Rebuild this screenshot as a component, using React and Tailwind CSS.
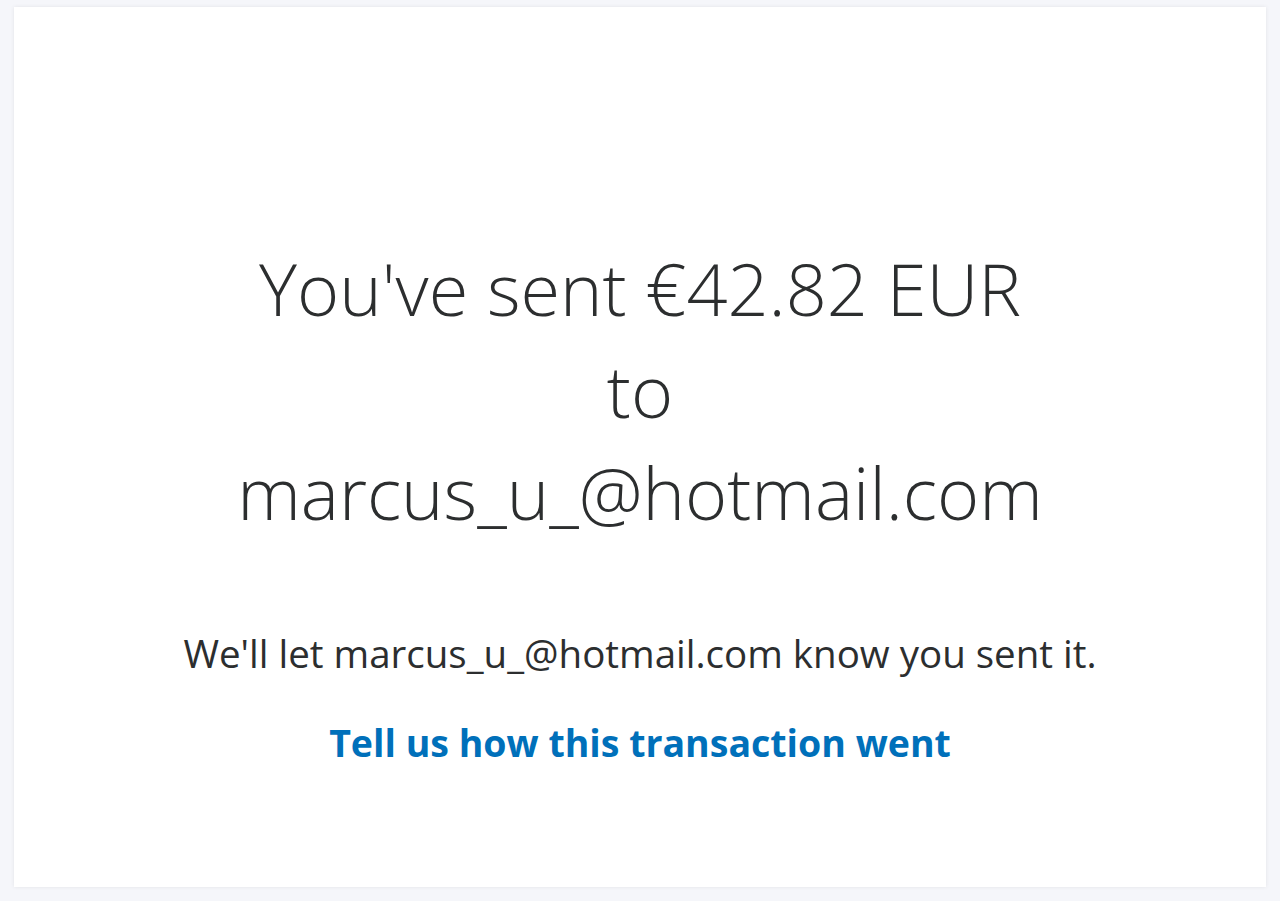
import React from 'react';

export default function App() {
  return (
    <div className="min-h-[901px] bg-[#f5f6fa] pt-[7px] pb-[14px] pl-[14px] pr-[14px] font-['Open_Sans',sans-serif]">
      <div className="h-[880px] bg-white shadow-[0_0_4px_rgba(0,0,0,0.08)] flex flex-col items-center pt-[230px] text-[#2c2e2f]">
        <h1 className="text-[72px] leading-[102px] font-light text-center">
          You've sent €42.82 EUR
          <br />
          to
          <br />
          marcus_u_@hotmail.com
        </h1>
        <p className="mt-[86px] text-[38.5px] leading-[48px]">
          We'll let marcus_u_@hotmail.com know you sent it.
        </p>
        <a href="#" className="mt-[42px] text-[37.5px] leading-[48px] font-bold text-[#0070ba]">
          Tell us how this transaction went
        </a>
      </div>
    </div>
  );
}
